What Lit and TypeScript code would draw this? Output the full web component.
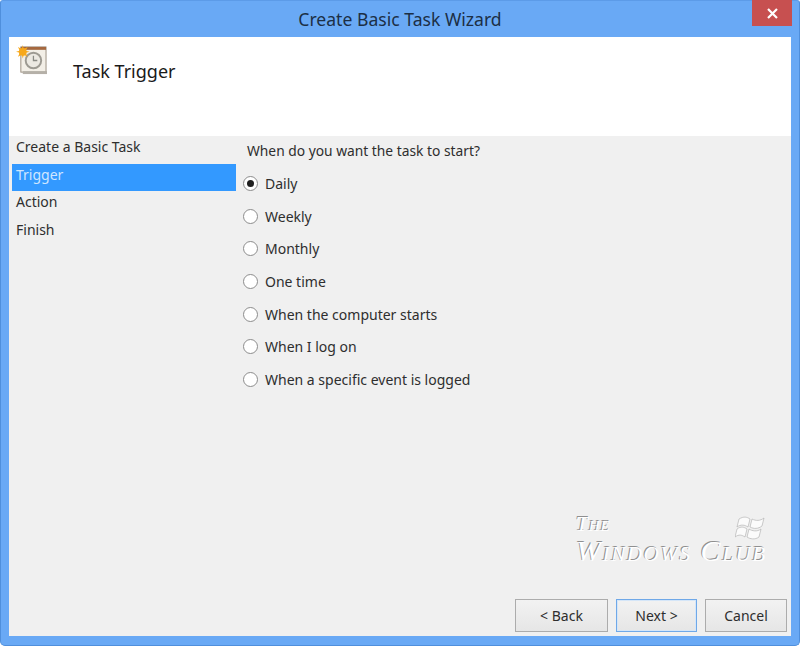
import { LitElement, html, css, svg } from "lit";
import { customElement } from "lit/decorators.js";

const OPTIONS = ["Daily", "Weekly", "Monthly", "One time", "When the computer starts", "When I log on", "When a specific event is logged"];
const STEPS = ["Create a Basic Task", "Trigger", "Action", "Finish"];

@customElement("app-root")
export class AppRoot extends LitElement {
  static styles = css`
    :host { display: block; width: 800px; height: 646px; overflow: hidden; font-family: "Noto Sans", "Open Sans", sans-serif; color: #2b2b2b; }
    .win { box-sizing: border-box; width: 800px; height: 646px; background: #69a9f5; display: flex; flex-direction: column; padding: 0 8px 9px 8px; border: 1px solid #4f8fdc; border-top-color: #5c9be8; border-radius: 3px 3px 5px 5px; }
    .titlebar { height: 36px; flex: none; display: flex; align-items: center; justify-content: center; position: relative; font-size: 17.6px; color: #1c2f45; }
    .close { position: absolute; right: -1px; top: -1px; width: 40px; height: 26px; background: #c75050; display: flex; align-items: center; justify-content: center; }
    .header { height: 99px; flex: none; background: #fff; display: flex; align-items: flex-start; padding: 8px 0 0 7px; box-sizing: border-box; }
    .header h1 { margin: 14px 0 0 26px; font-size: 18px; font-weight: 400; color: #1a1a1a; line-height: 24px; }
    .body { flex: 1; background: #f0f0f0; display: flex; flex-direction: column; position: relative; }
    .columns { flex: 1; display: flex; }
    .side { width: 227px; flex: none; padding: 0 0 0 3px; box-sizing: border-box; }
    .step { height: 27.67px; line-height: 22px; font-size: 14px; padding: 0 0 0 4px; box-sizing: border-box; color: #2e2e2e; }
    .step.sel { background: #3399ff; color: #cfe6ff; }
    .main { flex: 1; padding: 5px 0 0 11px; }
    .q { font-size: 13.8px; line-height: 20px; color: #2e2e2e; margin-bottom: 6.4px; }
    .opt { display: flex; align-items: center; height: 32.6px; font-size: 14px; color: #2e2e2e; margin-left: -4px; gap: 7px; }
    .radio { width: 15px; height: 15px; border-radius: 50%; border: 1px solid #8c8c8c; background: #fff; box-sizing: border-box; display: flex; align-items: center; justify-content: center; flex: none; }
    .radio i { width: 7px; height: 7px; border-radius: 50%; background: #1f1f1f; display: block; }
    .footer { flex: none; height: 37px; display: flex; justify-content: flex-end; gap: 8px; padding-right: 4px; box-sizing: border-box; }
    button { height: 33px; box-sizing: border-box; font: inherit; font-size: 14px; color: #2e2e2e; background: linear-gradient(#f2f2f2, #e6e6e6); border: 1px solid #acacac; padding: 0; }
    .back { width: 93px; } .next { width: 81px; border-color: #6fa8e8; box-shadow: inset 0 0 0 1px #d5e6f8; } .cancel { width: 82px; }
    .logo { position: absolute; left: 567px; top: 377px; width: 200px; height: 60px; font-family: "Liberation Serif", serif; font-style: italic; color: #fff; text-shadow: -1px -1px 0 #8f8f8f; font-variant: small-caps; }
    .logo .l1 { font-size: 21px; line-height: 19px; letter-spacing: 1px; position: absolute; left: 0; top: 2px; }
    .logo .l2 { font-size: 30px; line-height: 30px; letter-spacing: 1.6px; position: absolute; left: 0; top: 23px; white-space: nowrap; }
    .flag { position: absolute; left: 159px; top: 1px; }
  `;

  icon() {
    return html`<svg width="31" height="31" viewBox="0 0 32 32">
      <rect x="5" y="2" width="26" height="26" fill="#f3efe7" stroke="#9a8f80"/>
      <rect x="5" y="2" width="26" height="3" fill="#a5683f"/>
      <rect x="7" y="27" width="25" height="3" fill="#b5b0a8"/>
      <circle cx="18" cy="16" r="8" fill="#ece9e2" stroke="#9d9a92" stroke-width="2"/>
      <path d="M18 11v5h4" fill="none" stroke="#8a8a84" stroke-width="1.3"/>
      ${svg`<g fill="#f7a81b"><circle cx="7" cy="7" r="4"/><path d="M7 0l1 4H6zM7 14l1-4H6zM0 7l4-1v2zM14 7l-4-1v2zM2 2l4 2-2 2zM12 2l-4 2 2 2zM2 12l4-2-2-2zM12 12l-4-2 2-2z"/></g>`}
    </svg>`;
  }

  render() {
    return html`<div class="win">
      <div class="titlebar">Create Basic Task Wizard
        <div class="close"><svg width="13" height="11" viewBox="0 0 13 11"><path d="M2 1l9 9M11 1l-9 9" stroke="#fff" stroke-width="2.2" fill="none"/></svg></div>
      </div>
      <div class="header">${this.icon()}<h1>Task Trigger</h1></div>
      <div class="body">
        <div class="columns">
          <div class="side">${STEPS.map((s, i) => html`<div class="step ${i === 1 ? "sel" : ""}">${s}</div>`)}</div>
          <div class="main">
            <div class="q">When do you want the task to start?</div>
            ${OPTIONS.map((o, i) => html`<div class="opt"><span class="radio">${i === 0 ? html`<i></i>` : ""}</span><span>${o}</span></div>`)}
          </div>
        </div>
        <div class="footer">
          <button class="back">&lt; Back</button>
          <button class="next">Next &gt;</button>
          <button class="cancel">Cancel</button>
        </div>
        <div class="logo">
          <span class="l1">The</span><span class="l2">Windows Club</span>
          <svg class="flag" width="32" height="26" viewBox="0 0 32 26"><path d="M4 5c5-3 8-2 11 0l-2 8c-3-2-7-3-11 0zM17 5c4 2 8 2 12-1l-2 8c-4 3-8 3-12 1zM2 15c4-3 7-2 10 0l-2 8c-3-2-6-3-10 0zM14 15c3 2 8 3 12 0l-2 8c-4 3-9 2-12 0z" fill="#fbfbfb" stroke="#b5b5b5" stroke-width=".7"/></svg>
        </div>
      </div>
    </div>`;
  }
}
